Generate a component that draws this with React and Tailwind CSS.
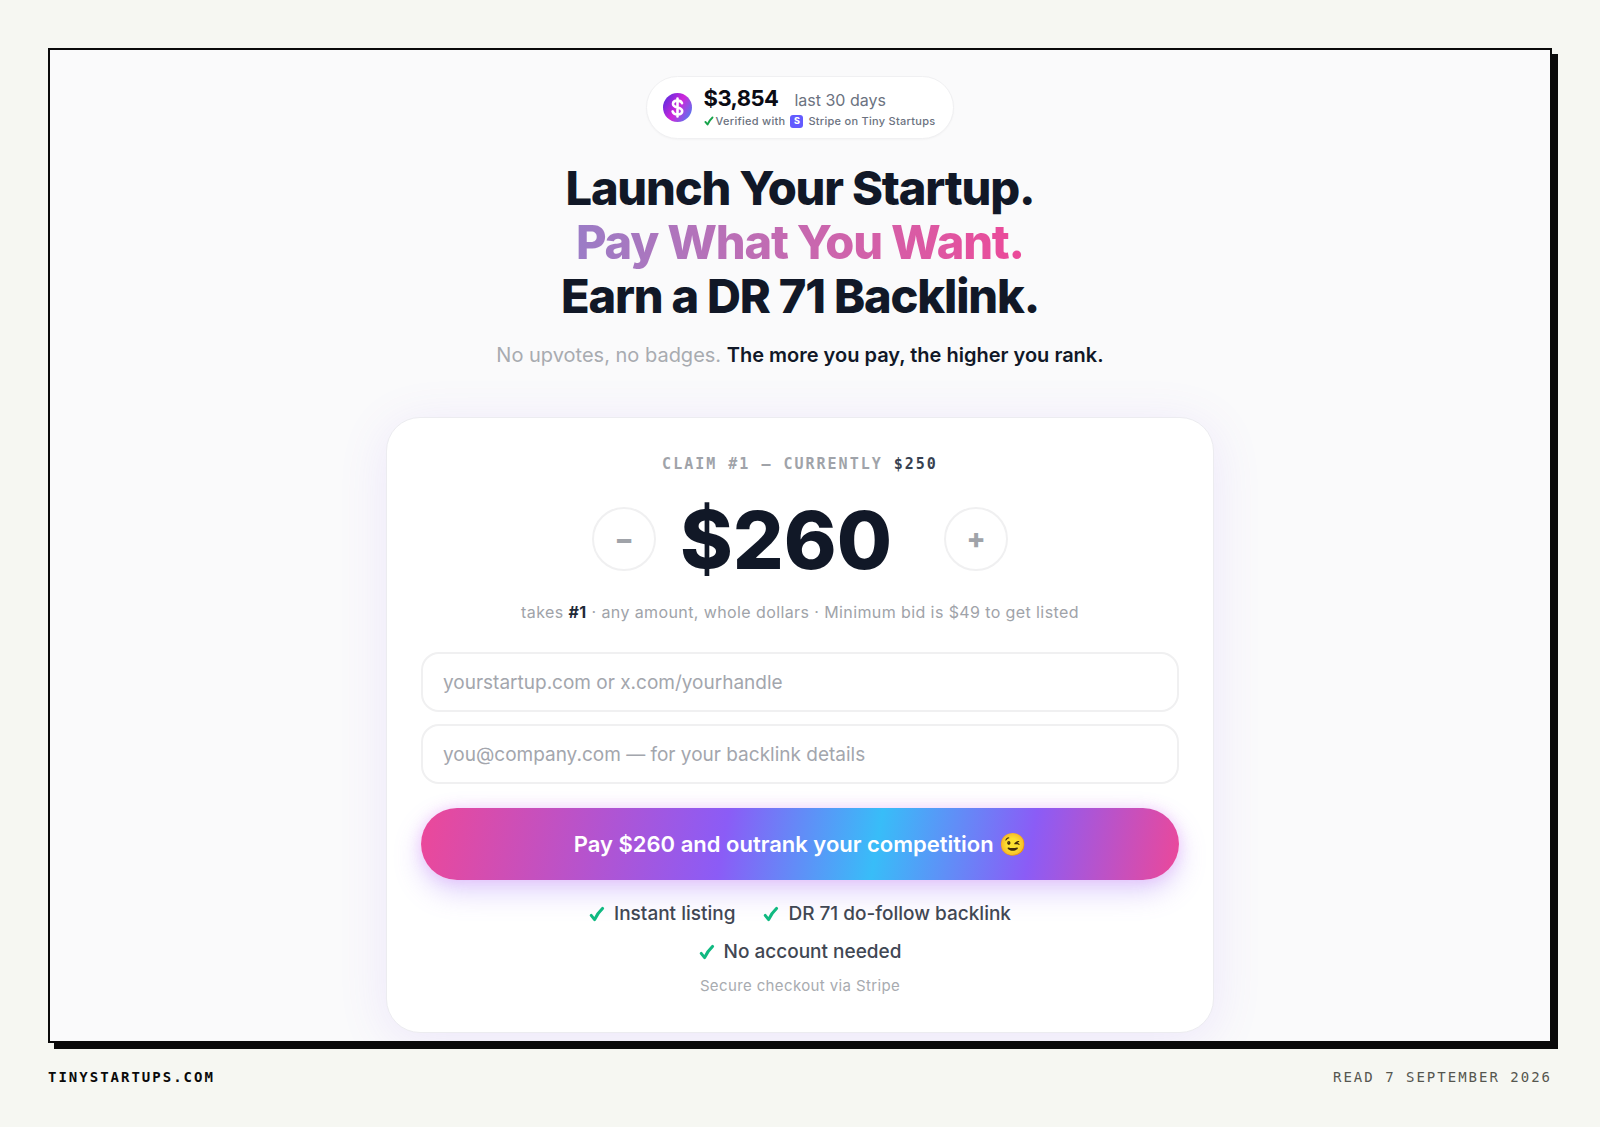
import { useState } from "react";

const PERKS = ["Instant listing", "DR 71 do-follow backlink", "No account needed"];

const Check = ({ className }) => (
  <svg viewBox="0 0 16 16" className={className} fill="none" stroke="currentColor" strokeLinecap="round" strokeLinejoin="round" aria-hidden="true">
    <path d="M2.2 9.4 5.6 13.6Q8.6 7 13.6 2.4" strokeWidth="3" />
  </svg>
);

const RevenueBadge = () => (
  <a href="#verified" className="inline-flex items-center gap-3 rounded-full border border-[#f0f0f2] bg-white py-[9px] pl-4 pr-[18px] shadow-[0_1px_2px_rgba(0,0,0,0.03)]">
    <svg viewBox="0 0 29 29" className="size-[29px] shrink-0" aria-hidden="true">
      <defs>
        <linearGradient id="coin" x1="0" y1="0.2" x2="1" y2="0.8">
          <stop offset="0" stopColor="#5b2be0" />
          <stop offset="0.5" stopColor="#d026d9" />
          <stop offset="1" stopColor="#4f7df0" />
        </linearGradient>
      </defs>
      <circle cx="14.5" cy="14.5" r="14.5" fill="url(#coin)" />
      <path d="M14.5 5.5v18M19 10.2c-.6-1.8-2.4-2.6-4.5-2.6-2.6 0-4.5 1.2-4.5 3.3 0 4.7 9.2 2.3 9.2 7.1 0 2.2-2 3.5-4.7 3.5-2.5 0-4.3-1.1-4.9-3.1" fill="none" stroke="#fff" strokeWidth="2.6" strokeLinecap="round" />
    </svg>
    <span className="flex flex-col">
      <span className="flex items-baseline gap-4">
        <span className="text-[22px] font-bold leading-[25px] tracking-tight text-[#0b0b14]">$3,854</span>
        <span className="text-base leading-[25px] text-[#6b7280]">last 30 days</span>
      </span>
      <span className="flex items-center text-[11px] font-medium leading-4 tracking-wide text-[#6b7280]">
        <Check className="mr-[2px] size-[10px] text-[#16a34a]" />
        Verified with
        <span className="mx-[5px] flex size-[13px] items-center justify-center rounded-[3px] bg-[#635bff] text-[9px] font-extrabold tracking-normal text-white">S</span>
        Stripe on Tiny Startups
      </span>
    </span>
  </a>
);

const StepButton = ({ label, onClick, children }) => (
  <button type="button" aria-label={label} onClick={onClick}
    className="flex size-16 items-center justify-center rounded-full border-2 border-[#f0f0f1] bg-white text-[28px] font-extrabold text-[#a0a3a9]">
    {children}
  </button>
);

const Field = (props) => (
  <input {...props}
    className="block h-[60px] w-full rounded-[18px] border-2 border-[#f0f0f1] bg-white px-5 text-[19px] text-gray-900 placeholder:text-[#a3a6ad] focus:outline-none focus:border-[#8b5cf6]" />
);

const BidCard = () => {
  const [bid, setBid] = useState(260);

  return (
    <form onSubmit={(e) => e.preventDefault()}
      className="mt-[46px] w-full max-w-[828px] rounded-[34px] border border-[#ececf0] bg-white px-[34px] pb-[34px] pt-9 text-center shadow-[0_8px_50px_rgba(139,92,246,0.12)]">
      <p className="font-['DejaVu_Sans_Mono',monospace] text-[15px] font-bold leading-5 tracking-[2px] text-[#a0a3a9]">
        CLAIM #1 — CURRENTLY <span className="text-[#374151]">$250</span>
      </p>
      <div className="mt-[33px] flex items-center justify-center gap-6">
        <StepButton label="Lower bid" onClick={() => setBid((b) => Math.max(49, b - 10))}>−</StepButton>
        <label className="flex h-16 w-60 items-center text-[80px] font-extrabold leading-none text-[#111827]">
          $
          <input name="bid" aria-label="Bid in dollars" inputMode="numeric" value={bid}
            onChange={(e) => setBid(Number(e.target.value.replace(/\D/g, "")))}
            className="h-24 w-full min-w-0 bg-transparent focus:outline-none" />
        </label>
        <StepButton label="Raise bid" onClick={() => setBid((b) => b + 10)}>+</StepButton>
      </div>
      <p className="mt-[29px] text-base leading-6 tracking-wide text-[#a0a3a9]">
        takes <strong className="font-bold text-[#1f2937]">#1</strong> · any amount, whole dollars · Minimum bid is $49 to get listed
      </p>
      <div className="mt-7 flex flex-col gap-3">
        <Field aria-label="Startup link" type="text" placeholder="yourstartup.com or x.com/yourhandle" />
        <Field aria-label="Email" type="email" placeholder="you@company.com — for your backlink details" />
      </div>
      <button type="submit"
        className="mt-6 flex h-[72px] w-full items-center justify-center rounded-full bg-[linear-gradient(100deg,#ec4899_0%,#8b5cf6_40%,#38bdf8_60%,#8b5cf6_80%,#ec4899_100%)] text-[22px] font-semibold text-white shadow-[0_0_14px_rgba(232,121,249,0.3),0_12px_28px_rgba(139,92,246,0.28)]">
        Pay ${bid} and outrank your competition 😉
      </button>
      <ul className="mx-auto mt-5 flex max-w-[520px] flex-wrap justify-center gap-x-7 gap-y-[10px]">
        {PERKS.map((perk) => (
          <li key={perk} className="flex items-center gap-[9px] text-[19px] font-medium leading-7 text-[#414753]">
            <Check className="size-4 text-[#10b981]" />
            {perk}
          </li>
        ))}
      </ul>
      <p className="mt-2 text-[15px] leading-6 tracking-wide text-[#a8abb0]">Secure checkout via Stripe</p>
    </form>
  );
};

export default function App() {
  return (
    <div className="min-h-screen bg-[#f6f7f2] px-12 pt-12 font-[Inter,sans-serif]">
      <main className="flex flex-col items-center overflow-hidden border-2 border-[#0a0a0a] bg-[#fafafb] pb-2 pt-[26px] shadow-[6px_6px_0_#0a0a0a]">
        <RevenueBadge />
        <h1 className="mt-[22px] text-center text-[47px] font-extrabold leading-[54px] tracking-tight text-[#111827]">
          Launch Your Startup.
          <br />
          <span className="bg-linear-to-r from-[#9b7cc6] to-[#ec4899] bg-clip-text text-transparent">Pay What You Want.</span>
          <br />
          Earn a DR 71 Backlink.
        </h1>
        <p className="mt-4 text-xl leading-8 text-[#a8abb0]">
          No upvotes, no badges. <strong className="font-semibold text-[#111827]">The more you pay, the higher you rank.</strong>
        </p>
        <BidCard />
      </main>
      <footer className="flex justify-between pb-10 pt-6 font-['DejaVu_Sans_Mono',monospace] text-sm leading-5 tracking-[2px]">
        <a href="#tinystartups" className="font-bold text-[#0a0a0a]">TINYSTARTUPS.COM</a>
        <span className="text-[#55564f]">READ 7 SEPTEMBER 2026</span>
      </footer>
    </div>
  );
}
